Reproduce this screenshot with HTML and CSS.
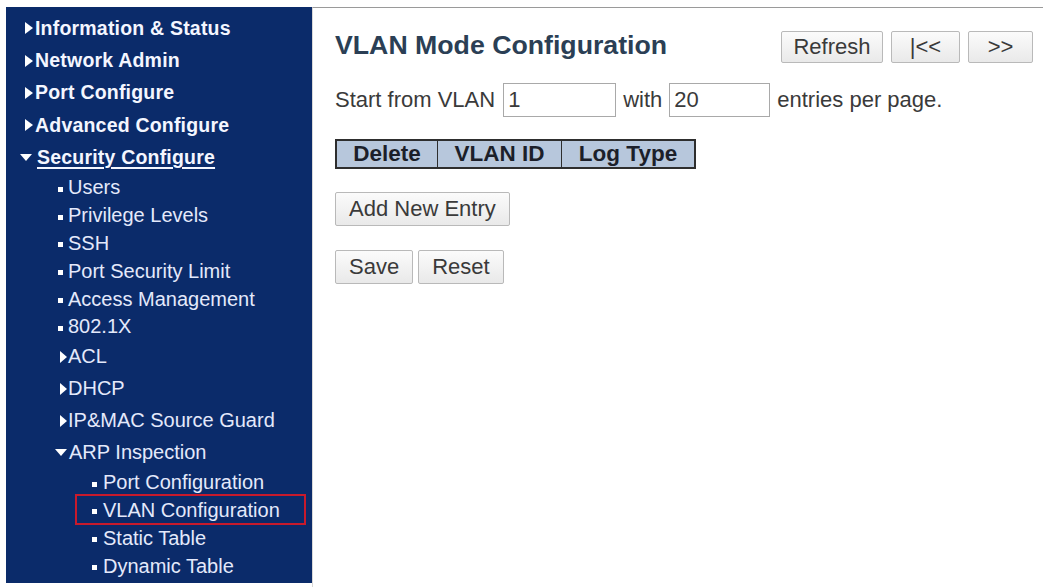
FILE: index.html
```html
<!DOCTYPE html>
<html lang="en">
<head>
<meta charset="utf-8">
<title>VLAN Mode Configuration</title>
<link rel="stylesheet" href="styles.css">
</head>
<body>
<div class="page">
  <nav class="sidebar">
    <ul class="menu">
      <li class="top"><span class="arr-r"></span>Information &amp; Status</li>
      <li class="top"><span class="arr-r"></span>Network Admin</li>
      <li class="top"><span class="arr-r"></span>Port Configure</li>
      <li class="top"><span class="arr-r"></span>Advanced Configure</li>
      <li class="top open"><span class="arr-d"></span><span class="ul">Security Configure</span></li>
      <li class="l2"><span class="dot"></span>Users</li>
      <li class="l2"><span class="dot"></span>Privilege Levels</li>
      <li class="l2"><span class="dot"></span>SSH</li>
      <li class="l2"><span class="dot"></span>Port Security Limit</li>
      <li class="l2"><span class="dot"></span>Access Management</li>
      <li class="l2"><span class="dot"></span>802.1X</li>
      <li class="l2f"><span class="arr-r"></span>ACL</li>
      <li class="l2f"><span class="arr-r"></span>DHCP</li>
      <li class="l2f"><span class="arr-r"></span>IP&amp;MAC Source Guard</li>
      <li class="l2f open"><span class="arr-d"></span>ARP Inspection</li>
      <li class="l3"><span class="dot"></span>Port Configuration</li>
      <li class="l3 sel"><span class="dot"></span>VLAN Configuration</li>
      <li class="l3"><span class="dot"></span>Static Table</li>
      <li class="l3"><span class="dot"></span>Dynamic Table</li>
    </ul>
  </nav>
  <main class="content">
    <div class="header">
      <h1 class="title">VLAN Mode Configuration</h1>
      <div class="nav-buttons">
        <button class="btn btn-refresh">Refresh</button>
        <button class="btn btn-first">|&lt;&lt;</button>
        <button class="btn btn-next">&gt;&gt;</button>
      </div>
    </div>
    <div class="range-row">
      <span>Start from VLAN</span>
      <input class="field field-start" type="text" value="1">
      <span>with</span>
      <input class="field field-count" type="text" value="20">
      <span>entries per page.</span>
    </div>
    <table class="grid">
      <thead>
        <tr><th class="c1">Delete</th><th class="c2">VLAN ID</th><th class="c3">Log Type</th></tr>
      </thead>
    </table>
    <div class="row-add">
      <button class="btn btn-big">Add New Entry</button>
    </div>
    <div class="row-save">
      <button class="btn btn-big">Save</button>
      <button class="btn btn-big">Reset</button>
    </div>
  </main>
</div>
</body>
</html>
```

FILE: styles.css
```css
html, body {
  margin: 0;
  padding: 0;
  background: #ffffff;
  font-family: "Liberation Sans", Arial, sans-serif;
}

.page {
  display: flex;
  align-items: flex-start;
  width: 1043px;
  height: 587px;
  overflow: hidden;
}

.sidebar {
  margin: 7px 0 0 6px;
  width: 306px;
  height: 576px;
  background: #0b2b6a;
  box-sizing: border-box;
  padding-top: 5px;
}

.menu {
  list-style: none;
  margin: 0;
  padding: 0;
}

.menu li {
  display: flex;
  align-items: center;
  color: #e4e9fb;
  font-size: 20px;
  white-space: nowrap;
  position: relative;
}

.menu li.top {
  height: 32.4px;
  font-weight: bold;
  color: #f4f6ff;
  font-size: 19.5px;
  letter-spacing: 0.2px;
}

.menu li.l2 { height: 27.8px; }
.menu li.l2f { height: 32px; }
.menu li.l3 { height: 27.8px; }

.arr-r {
  display: inline-block;
  width: 0;
  height: 0;
  border-top: 6px solid transparent;
  border-bottom: 6px solid transparent;
  border-left: 8px solid #ffffff;
}

.arr-d {
  display: inline-block;
  width: 0;
  height: 0;
  border-left: 6px solid transparent;
  border-right: 6px solid transparent;
  border-top: 7px solid #ffffff;
}

.dot {
  display: inline-block;
  width: 5px;
  height: 5px;
  background: #ffffff;
  margin-top: 3px;
}

.top .arr-r { margin-left: 19px; margin-right: 2px; }
.top .arr-d { margin-left: 14px; margin-right: 5px; }
.ul { text-decoration: underline; text-underline-offset: 3px; text-decoration-thickness: 2px; }

.l2 .dot { margin-left: 52px; margin-right: 5px; }
.l2f .arr-r { margin-left: 54px; margin-right: 1px; border-left-width: 7px; }
.l2f .arr-d { margin-left: 49px; margin-right: 2px; border-left-width: 6px; border-right-width: 6px; }
.l3 .dot { margin-left: 86px; margin-right: 6px; }

.sel::after {
  content: "";
  position: absolute;
  left: 69px;
  right: 6px;
  top: -3px;
  bottom: -1px;
  border: 2px solid #c81a2c;
}

.content {
  flex: 1;
  margin-top: 7px;
  height: 580px;
  border-top: 1px solid #9a9a9a;
  border-left: 1px solid #d8d8d8;
  box-sizing: border-box;
  padding: 23px 10px 0 22px;
  color: #3a3a3a;
  font-size: 22px;
}

.header {
  display: flex;
  justify-content: space-between;
  align-items: center;
  height: 32px;
}

.title {
  margin: 0 0 5px 0;
  font-size: 26.7px;
  font-weight: bold;
  color: #2b3f55;
  line-height: 32px;
}

.nav-buttons {
  display: flex;
  gap: 8px;
}

.btn {
  font-family: "Liberation Sans", Arial, sans-serif;
  font-size: 22px;
  color: #3a3a3a;
  background: linear-gradient(#fbfbfb, #e9e9e9);
  border: 1px solid #b9b9b9;
  border-radius: 2px;
  padding: 0 13px;
  margin: 0;
  box-sizing: border-box;
  height: 34px;
}

.btn-refresh { height: 32px; width: 102px; padding: 0; }
.btn-first { height: 32px; width: 69px; padding: 0; }
.btn-next { height: 32px; width: 65px; padding: 0; }

.range-row {
  display: flex;
  align-items: center;
  margin-top: 20px;
  height: 34px;
  gap: 7px;
}

.field {
  font-family: "Liberation Sans", Arial, sans-serif;
  font-size: 22px;
  color: #3a3a3a;
  height: 34px;
  box-sizing: border-box;
  border: 1px solid #a9a9a9;
  padding: 0 4px;
  margin: 0;
}

.field-start { width: 113px; margin-left: 1px; }
.field-count { width: 101px; }

.grid {
  margin-top: 22px;
  border-collapse: separate;
  border-spacing: 0;
  border: 2px solid #2e2e2e;
}

.grid th {
  background: #b7c7dc;
  color: #1c1f2a;
  font-size: 22.5px;
  font-weight: bold;
  height: 26px;
  padding: 0;
  text-align: center;
  box-sizing: border-box;
}

.grid th + th { border-left: 1px solid #2e2e2e; }
.grid .c1 { width: 100px; }
.grid .c2 { width: 124px; }
.grid .c3 { width: 133px; }

.row-add {
  margin-top: 23px;
  display: flex;
}

.row-save {
  margin-top: 24px;
  display: flex;
  gap: 5px;
}
```
